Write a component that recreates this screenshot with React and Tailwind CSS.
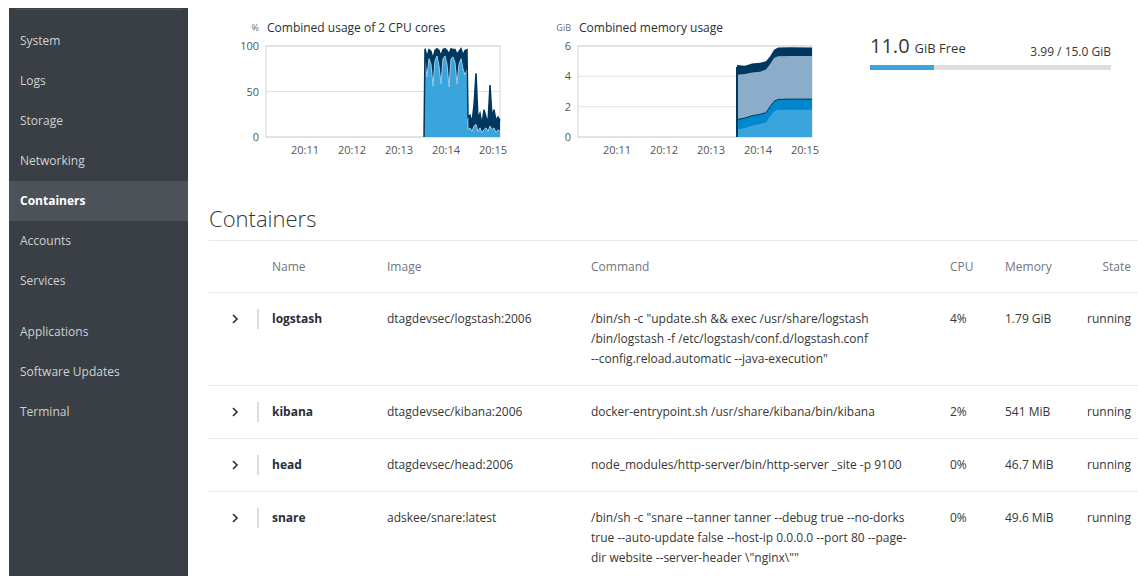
const NAV_MAIN = ["System", "Logs", "Storage", "Networking", "Containers", "Accounts", "Services"];
const NAV_TOOLS = ["Applications", "Software Updates", "Terminal"];

const CONTAINERS = [
  {
    name: "logstash",
    image: "dtagdevsec/logstash:2006",
    command: [
      '/bin/sh -c "update.sh && exec /usr/share/logstash',
      "/bin/logstash -f /etc/logstash/conf.d/logstash.conf",
      '--config.reload.automatic --java-execution"',
    ],
    cpu: "4%",
    memory: "1.79 GiB",
    state: "running",
  },
  {
    name: "kibana",
    image: "dtagdevsec/kibana:2006",
    command: ["docker-entrypoint.sh /usr/share/kibana/bin/kibana"],
    cpu: "2%",
    memory: "541 MiB",
    state: "running",
  },
  {
    name: "head",
    image: "dtagdevsec/head:2006",
    command: ["node_modules/http-server/bin/http-server _site -p 9100"],
    cpu: "0%",
    memory: "46.7 MiB",
    state: "running",
  },
  {
    name: "snare",
    image: "adskee/snare:latest",
    command: [
      '/bin/sh -c "snare --tanner tanner --debug true --no-dorks',
      "true --auto-update false --host-ip 0.0.0.0 --port 80 --page-",
      'dir website --server-header \\"nginx\\""',
    ],
    cpu: "0%",
    memory: "49.6 MiB",
    state: "running",
  },
];

// [x offset in plot, total %, user %]
const CPU = [
  [158, 0, 0], [159, 97, 82], [161, 88, 66], [163, 96, 86], [165, 94, 80], [167, 86, 56],
  [169, 95, 84], [171, 97, 89], [173, 95, 78], [175, 89, 58], [177, 96, 86], [179, 97, 89],
  [181, 95, 80], [183, 91, 55], [185, 97, 86], [187, 96, 88], [189, 96, 82], [191, 91, 58],
  [193, 94, 80], [195, 97, 86], [197, 90, 75], [199, 95, 68], [201, 96, 74], [202, 22, 8],
  [204, 24, 10], [206, 16, 6], [208, 35, 12], [210, 70, 14], [212, 20, 6], [214, 26, 10],
  [216, 14, 5], [218, 30, 8], [220, 22, 10], [222, 16, 6], [224, 57, 12], [226, 22, 8],
  [228, 30, 10], [230, 18, 5], [232, 22, 8], [234, 18, 6],
];

// [x offset in plot, total, cache top, rss top, swap top] in GiB
const MEM = [
  [159, 4.75, 4.1, 1.15, 0.5], [167, 4.7, 4.15, 1.25, 0.6], [174, 4.85, 4.25, 1.4, 0.75],
  [182, 4.9, 4.3, 1.5, 0.85], [188, 5.0, 4.45, 1.6, 0.95], [192, 5.3, 4.8, 2.0, 1.35],
  [196, 5.75, 5.2, 2.35, 1.7], [200, 5.9, 5.33, 2.48, 1.8], [212, 5.92, 5.35, 2.5, 1.8],
  [234, 5.9, 5.35, 2.5, 1.8],
];

const PLOT_X = 30;
const PLOT_Y = 8;
const PLOT_W = 234;
const PLOT_H = 91;
const TIMES = ["20:11", "20:12", "20:13", "20:14", "20:15"];

function area(points, col, max) {
  const y = (v) => PLOT_Y + PLOT_H - (v / max) * PLOT_H;
  const first = points[0][0] + PLOT_X;
  const last = points[points.length - 1][0] + PLOT_X;
  const line = points.map((p) => `L${p[0] + PLOT_X} ${y(p[col]).toFixed(1)}`).join(" ");
  return `M${first} ${PLOT_Y + PLOT_H} ${line} L${last} ${PLOT_Y + PLOT_H} Z`;
}

function polyline(points, col, max) {
  const y = (v) => PLOT_Y + PLOT_H - (v / max) * PLOT_H;
  return points.map((p) => `${p[0] + PLOT_X},${y(p[col]).toFixed(1)}`).join(" ");
}

function Chart({ unit, title, ticks, max, children }) {
  return (
    <div className="w-[276px]">
      <div className="flex items-center h-[20px]">
        <span className="w-[23px] text-right text-[9px] text-[#6a6e73]">{unit}</span>
        <span className="ml-[8px] text-[12px] text-[#292e34]">{title}</span>
      </div>
      <svg width="276" height="122" className="block">
        {ticks.map((t) => {
          const y = PLOT_Y + PLOT_H - (t / max) * PLOT_H;
          return (
            <g key={t}>
              <line x1={PLOT_X} x2={PLOT_X + PLOT_W} y1={y} y2={y} stroke="#e2e2e2" />
              <text x={PLOT_X - 7} y={y + 4} textAnchor="end" fontSize="11" fill="#555">
                {t}
              </text>
            </g>
          );
        })}
        <rect x={PLOT_X} y={PLOT_Y} width={PLOT_W} height={PLOT_H} fill="none" stroke="#d4d4d4" />
        {children}
        {TIMES.map((t, i) => (
          <text key={t} x={69 + i * 47} y={116} textAnchor="middle" fontSize="11" fill="#555">
            {t}
          </text>
        ))}
      </svg>
    </div>
  );
}

function Chevron() {
  return (
    <svg width="8" height="10" viewBox="0 0 8 10">
      <polyline points="2,1 6,5 2,9" fill="none" stroke="#292e34" strokeWidth="1.6" />
    </svg>
  );
}

const COLS = "grid grid-cols-[48px_130px_204px_359px_55px_80px_1fr] border-t border-[#e9e9e9] py-4";

export default function App() {
  return (
    <div className="flex h-[576px] w-[1138px] overflow-hidden bg-white font-['Open_Sans',sans-serif] text-[#363636]">
      <nav className="ml-[9px] mt-[8px] w-[179px] shrink-0 bg-[#393f44] text-[12px] text-[#d1d1d1]">
        <div className="mx-[6px] mt-[1px] h-px bg-[#4f555a]" />
        <div className="pt-[11px]">
          {NAV_MAIN.map((item) => (
            <div
              key={item}
              className={
                item === "Containers"
                  ? "h-[40px] flex items-center px-[11px] bg-[#4d5258] font-bold text-white"
                  : "h-[40px] flex items-center px-[11px]"
              }
            >
              {item}
            </div>
          ))}
        </div>
        <div className="mt-[11px]">
          {NAV_TOOLS.map((item) => (
            <div key={item} className="h-[40px] flex items-center px-[11px]">
              {item}
            </div>
          ))}
        </div>
      </nav>

      <main className="flex-1 min-w-0 pt-[18px]">
        <div className="flex items-start">
          <div className="ml-[48px]">
            <Chart unit="%" title="Combined usage of 2 CPU cores" ticks={[0, 50, 100]} max={100}>
              <path d={area(CPU, 1, 100)} fill="#00375f" />
              <path d={area(CPU, 2, 100)} fill="#39a5dc" />
              <polyline points={polyline(CPU.slice(1), 2, 100)} fill="none" stroke="#9ec9e5" strokeWidth="1" />
              <polyline points={polyline(CPU, 1, 100)} fill="none" stroke="#00375f" strokeWidth="1.5" />
            </Chart>
          </div>
          <div className="ml-[36px]">
            <Chart unit="GiB" title="Combined memory usage" ticks={[0, 2, 4, 6]} max={6}>
              <path d={area(MEM, 1, 6)} fill="#00375f" />
              <path d={area(MEM, 2, 6)} fill="#8badca" />
              <path d={area(MEM, 3, 6)} fill="#0088ce" />
              <path d={area(MEM, 4, 6)} fill="#39a5dc" />
              <polyline points={polyline(MEM, 3, 6)} fill="none" stroke="#00375f" strokeWidth="1" />
              <line x1={189} x2={189} y1={PLOT_Y + 21} y2={PLOT_Y + PLOT_H} stroke="#00375f" strokeWidth="2" />
            </Chart>
          </div>
          <div className="ml-[46px] mt-[16px] w-[241px]">
            <div className="flex items-end justify-between">
              <div className="flex items-baseline gap-[5px]">
                <span className="text-[20px] leading-[24px] text-[#363636]">11.0</span>
                <span className="text-[13px] text-[#363636]">GiB Free</span>
              </div>
              <span className="text-[12px] text-[#363636] mb-[-2px]">3.99 / 15.0 GiB</span>
            </div>
            <div className="mt-[6px] h-[5px] bg-[#dedede]">
              <div className="h-full bg-[#39a5dc]" style={{ width: `${(3.99 / 15.0) * 100}%` }} />
            </div>
          </div>
        </div>

        <div className="ml-[21px] mt-[44px]">
          <h2 className="text-[22px] leading-[28px] font-light text-[#363636]">Containers</h2>
          <div className="mt-[8px] text-[12px]">
            <div className={`${COLS} text-[#72767b] leading-[19px]`}>
              <div />
              <div className="pl-[15px]">Name</div>
              <div>Image</div>
              <div>Command</div>
              <div>CPU</div>
              <div>Memory</div>
              <div className="text-right pr-[7px]">State</div>
            </div>
            {CONTAINERS.map((c) => (
              <div key={c.name} className={`${COLS} leading-[20px]`}>
                <div className="flex h-[20px] items-center justify-center pl-[3px]">
                  <Chevron />
                </div>
                <div className="flex items-start">
                  <div className="w-[2px] h-[20px] bg-[#dcdcdc]" />
                  <span className="pl-[13px] font-bold text-[#292e34]">{c.name}</span>
                </div>
                <div>{c.image}</div>
                <div>
                  {c.command.map((line) => (
                    <div key={line} className="whitespace-nowrap">
                      {line}
                    </div>
                  ))}
                </div>
                <div>{c.cpu}</div>
                <div>{c.memory}</div>
                <div className="text-right pr-[7px]">{c.state}</div>
              </div>
            ))}
          </div>
        </div>
      </main>
    </div>
  );
}
